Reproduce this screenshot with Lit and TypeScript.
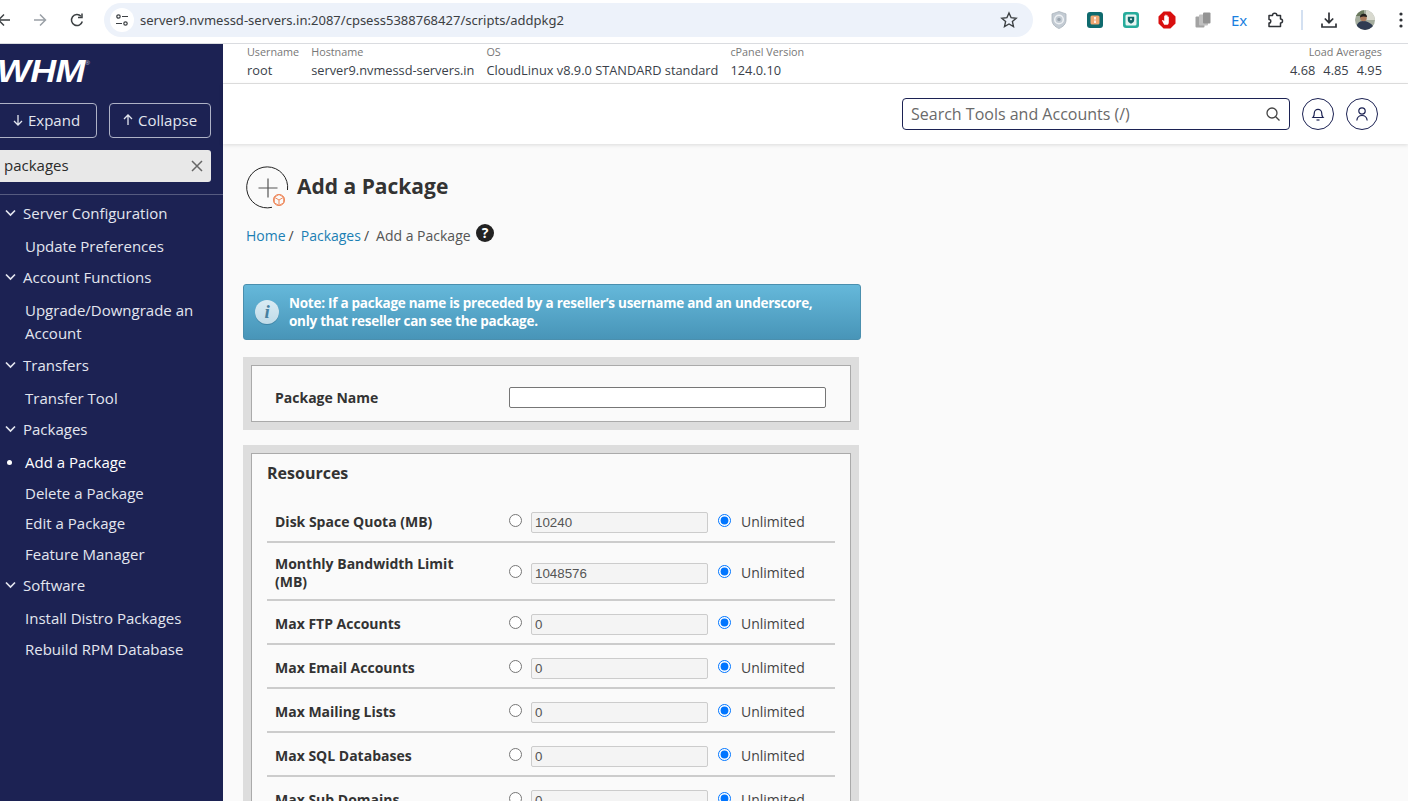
import { LitElement, html, css, svg } from "lit";
import { customElement } from "lit/decorators.js";

const NAV: [string, string][] = [
  ["h", "Server Configuration"], ["c", "Update Preferences"],
  ["h", "Account Functions"], ["c", "Upgrade/Downgrade an Account"],
  ["h", "Transfers"], ["c", "Transfer Tool"],
  ["h", "Packages"], ["a", "Add a Package"], ["c", "Delete a Package"], ["c", "Edit a Package"], ["c", "Feature Manager"],
  ["h", "Software"], ["c", "Install Distro Packages"], ["c", "Rebuild RPM Database"],
];
const ROWS: [string, string][] = [
  ["Disk Space Quota (MB)", "10240"], ["Monthly Bandwidth Limit (MB)", "1048576"],
  ["Max FTP Accounts", "0"], ["Max Email Accounts", "0"], ["Max Mailing Lists", "0"],
  ["Max SQL Databases", "0"], ["Max Sub Domains", "0"],
];
const EXT = [
  svg`<path d="M10 1.500l7 2.400v6.100c0 4-3 6.900-7 8.500-4-1.600-7-4.500-7-8.500V3.900z" fill="#c3cbd3" stroke="#a9b2bb" stroke-width=".8"/><circle cx="10" cy="9.500" r="4.300" fill="none" stroke="#eef1f4" stroke-width="1.500"/><circle cx="10" cy="9.500" r="1.700" fill="#9aa4ae"/>`,
  svg`<rect x="2" y="2" width="16" height="16" rx="3" fill="#0f6a6e"/><rect x="5.500" y="5.500" width="9" height="9" rx="1.500" fill="#f0a873"/><rect x="9.200" y="7" width="1.600" height="2.500" fill="#fff"/><rect x="9.200" y="10.500" width="1.600" height="2.500" fill="#fff"/>`,
  svg`<rect x="2" y="2" width="16" height="16" rx="3" fill="#27ac9c"/><rect x="4.500" y="4.500" width="11" height="11" rx="1.500" fill="#e9f6f3"/><path d="M6.800 6.800h6.400v3.200c0 1.800-1.400 3-3.200 3.800-1.800-.8-3.200-2-3.200-3.800z" fill="#14696b"/><circle cx="10" cy="9.300" r="1" fill="#e9f6f3"/>`,
  svg`<path d="M6.600 1.500h6.800l5.100 5.100v6.800l-5.100 5.100H6.600l-5.100-5.100V6.600z" fill="#d90f0f"/><path d="M7.200 14.800L5.200 11c-.4-.8.600-1.300 1.100-.7l.9 1V6.200c0-.9 1.100-.9 1.100 0v2.600-3.600c0-.9 1.200-.9 1.200 0v3.600-3c0-.9 1.200-.9 1.200 0v3.400-2.200c0-.8 1.100-.8 1.100 0v5.200c0 1.700-.7 2.600-2 2.600z" fill="#fff"/>`,
  svg`<rect x="2.500" y="6.500" width="9" height="11" rx="1" fill="#a3a3a3"/><rect x="6" y="4.500" width="9" height="11" rx="1" fill="#c0c0c0"/><rect x="10" y="2.500" width="7.500" height="11" rx="1" fill="#939393"/>`,
];

@customElement("app-root")
export class AppRoot extends LitElement {
  static styles = css`
    :host { display: block; width: 1408px; height: 801px; overflow: hidden; font-family: "Open Sans", "Noto Sans", sans-serif; color: #333; background: #fafafa; }
    * { box-sizing: border-box; }
    .page { display: flex; flex-direction: column; width: 1408px; height: 801px; overflow: hidden; }
    .toolbar { flex: none; height: 44px; background: #fff; border-bottom: 1px solid #dadce0; display: flex; align-items: center; padding-bottom: 4px; margin-left: -14px; width: 1440px; }
    .tb { flex: none; width: 36px; height: 36px; display: flex; align-items: center; justify-content: center; }
    .tb svg { display: block; }
    .reload { margin-left: 1px; }
    .pill { flex: none; width: 929px; height: 34px; margin-left: 9px; margin-right: 8px; border-radius: 17px; background: #edf2fa; display: flex; align-items: center; padding: 0 6px; font: 13px "Noto Sans", "Open Sans", sans-serif; color: #3c4043; }
    .tune { width: 24px; height: 24px; border-radius: 50%; background: #fff; display: flex; align-items: center; justify-content: center; margin-right: 6px; }
    .url { flex: 1; letter-spacing: 0.01px; }
    .star { flex: none; margin-right: 9px; display: block; }
    .ex { color: #1a7fe0; font: 15px "Noto Sans", sans-serif; letter-spacing: -0.2px; }
    .sep { flex: none; width: 2px; height: 20px; background: #d3e0f1; margin: 0 8px; }

    .body { flex: 1; display: flex; min-height: 0; }
    .side { flex: none; width: 223px; background: #1c2253; color: #e3e6ef; overflow: hidden; }
    .logo { height: 59px; padding: 10px 0 0 0; margin-left: -3px; font: italic 700 32px/34px "Liberation Sans", sans-serif; color: #fff; letter-spacing: -0.5px; white-space: nowrap; transform: scaleX(1.12); transform-origin: 0 50%; }
    .logo sup { font-size: 6px; font-style: normal; font-weight: 400; vertical-align: top; line-height: 18px; letter-spacing: 0; color: #c9ccdb; }
    .side-btns { display: flex; gap: 12px; margin-left: -12px; }
    .sbtn { height: 35px; border: 1px solid #aeb2c6; border-radius: 4px; display: flex; align-items: center; gap: 4px; font-size: 15px; color: #e3e6ef; padding: 0 0 2px; }
    .sbtn.e { width: 109px; padding-left: 23px; }
    .sbtn.c { width: 102px; padding-left: 12px; }
    .filter { margin: 12px 12px 0 -8px; height: 32px; background: #e8e8e8; border-radius: 3px; color: #2b2b2b; font-size: 15px; display: flex; align-items: center; justify-content: space-between; padding: 0 8px 2px 12px; }
    .filter svg { margin-top: 2px; }
    .rule { height: 1px; background: #565b80; margin-top: 12px; }
    nav { padding-top: 0.600px; }
    .head { height: 34px; display: flex; align-items: center; font-size: 15px; padding-left: 23px; position: relative; }
    .head svg { position: absolute; left: 5px; top: 13px; }
    .item { font-size: 15px; line-height: 23px; padding: 5px 12px 2.500px 25px; position: relative; }
    .item.a { color: #fff; }
    .item.a::before { content: ""; position: absolute; left: 7px; top: 13.500px; width: 5px; height: 5px; border-radius: 50%; background: #fff; }

    .main { flex: 1; min-width: 0; display: flex; flex-direction: column; }
    .info { flex: none; height: 40px; background: #fff; border-bottom: 1px solid #e2e2e2; display: flex; gap: 12px; padding: 1px 26px 0 24px; }
    .cell { display: flex; flex-direction: column; }
    .cell.load { margin-left: auto; align-items: flex-end; }
    .lab { font-size: 10.800px; line-height: 14px; color: #777; }
    .val { font-size: 12.800px; line-height: 22px; color: #3a3f4a; white-space: nowrap; }
    .vals { display: flex; gap: 8px; }
    .top { flex: none; height: 60px; background: #fff; box-shadow: 0 1px 4px rgba(0,0,0,.13); display: flex; align-items: center; justify-content: flex-end; gap: 12px; padding: 0 30px 0 0; position: relative; }
    .search { width: 388px; height: 32px; border: 1px solid #1c2253; border-radius: 4px; display: flex; align-items: center; justify-content: space-between; padding: 0 8px; font-size: 16px; color: #6a6a6a; }
    .round { width: 32px; height: 32px; border: 1px solid #1c2253; border-radius: 50%; display: flex; align-items: center; justify-content: center; }
    .content { flex: 1; min-height: 0; overflow: hidden; padding: 22px 0 0 20px; }
    .title { display: flex; align-items: center; gap: 7px; margin-left: 3px; }
    .title svg { display: block; flex: none; }
    h1 { margin: 0; font-size: 21px; font-weight: 700; color: #333; line-height: 40px; padding-bottom: 4px; }
    .crumbs { display: flex; align-items: center; margin: 13px 0 0 3px; font-size: 14px; height: 24px; color: #555; }
    .crumbs a { color: #1b7fb4; }
    .crumbs .s { margin: 0 7px 0 3px; color: #444; }
    .crumbs svg { margin: -4px 0 0 5px; }
    .alert { width: 618px; height: 56px; margin-top: 37px; border: 1px solid #4a8fae; border-radius: 3px; background: linear-gradient(#65b8da, #4895b8); display: flex; align-items: center; color: #fff; font-size: 13.500px; font-weight: 700; line-height: 18px; padding-left: 11px; gap: 10px; letter-spacing: -0.26px; }
    .alert svg { flex: none; }
    .panel { width: 616px; background: #ddd; padding: 8px; }
    .panel.pk { margin-top: 17px; height: 73px; }
    .panel.res { margin-top: 15px; }
    .inner { background: #fafafa; border: 1px solid #aaa; }
    .pk .inner { height: 57px; display: flex; align-items: center; padding: 8px 0 0 23px; }
    .lbl { flex: none; width: 234px; font-size: 14px; font-weight: 700; color: #333; line-height: 18px; padding-right: 40px; }
    .pk input { width: 317px; height: 21px; border: 1px solid #767676; border-radius: 2px; background: #fff; padding: 0 4px; }
    .res .inner { padding: 0 15px; }
    h2 { margin: 0; font-size: 16px; font-weight: 700; color: #333; line-height: 22px; padding-top: 8px; height: 45px; }
    .row { display: flex; align-items: center; min-height: 44px; border-bottom: 2px solid #ccc; padding: 4px 0 0 8px; }
    .row.tall { min-height: 58px; }
    .row input[type="radio"] { flex: none; margin: 0; width: 13px; height: 13px; position: relative; top: -2px; }
    .row input[type="text"] { flex: none; width: 177px; height: 21px; margin: 0 10px 0 9px; border: 1px solid #ccc; border-radius: 2px; background: #f4f4f4; color: #555; font: 13.330px "Liberation Sans", Arial, sans-serif; padding: 0 3px; }
    .un { font-size: 14px; color: #444; margin: -1px 0 0 10px; }
  `;

  render() {
    return html`<div class="page">
      <div class="toolbar">
        <div class="tb"><svg width="16" height="16" viewBox="0 0 16 16" fill="none" stroke="#3c4043" stroke-width="1.500"><path d="M14 8H2.500M8 2.500L2.500 8 8 13.500"/></svg></div>
        <div class="tb"><svg width="16" height="16" viewBox="0 0 16 16" fill="none" stroke="#9aa0a6" stroke-width="1.500"><path d="M2 8h11.500M8 2.500L13.500 8 8 13.500"/></svg></div>
        <div class="tb reload"><svg width="16" height="16" viewBox="0 0 16 16" fill="none" stroke="#3c4043" stroke-width="1.500"><path d="M13.300 9.500A5.500 5.500 0 1 1 12 4.300"/><path d="M13 1.500v4H9" /></svg></div>
        <div class="pill">
          <div class="tune"><svg width="14" height="14" viewBox="0 0 14 14" fill="none" stroke="#3c4043" stroke-width="1.200"><circle cx="3.500" cy="3.500" r="1.700"/><path d="M7 3.500h6M1 10.500h6"/><circle cx="10.500" cy="10.500" r="1.700"/></svg></div>
          <div class="url">server9.nvmessd-servers.in:2087/cpsess5388768427/scripts/addpkg2</div>
          <svg class="star" width="18" height="18" viewBox="0 0 18 18" fill="none" stroke="#3c4043" stroke-width="1.400"><path d="M9 2l2.100 4.700 5.100.5-3.800 3.400 1.100 5L9 13l-4.500 2.600 1.100-5L1.800 7.200l5.100-.5z"/></svg>
        </div>
        ${EXT.map((e) => html`<div class="tb"><svg width="20" height="20" viewBox="0 0 20 20">${e}</svg></div>`)}
        <div class="tb"><span class="ex">Ex</span></div>
        <div class="tb"><svg width="18" height="18" viewBox="0 0 18 18" fill="none" stroke="#2f3237" stroke-width="1.500"><path d="M3 4.500h3.500a2.200 2.200 0 0 1 4.400 0H14.500v3.500a2 2 0 0 1 0 4v3.500H3v-3.500a1.800 1.800 0 0 0 0-3.600z" stroke-linejoin="round"/></svg></div>
        <div class="sep"></div>
        <div class="tb"><svg width="18" height="18" viewBox="0 0 18 18" fill="none" stroke="#2f3237" stroke-width="1.700"><path d="M9 1.500v10M4.800 7.500L9 11.700l4.200-4.200M2 12.500v3.500h14v-3.500"/></svg></div>
        <div class="tb"><svg width="20" height="20" viewBox="0 0 20 20"><defs><clipPath id="av"><circle cx="10" cy="10" r="10"/></clipPath></defs><g clip-path="url(#av)"><rect width="20" height="20" fill="#a5ad9e"/><rect x="11" width="9" height="10" fill="#d8d9cf"/><rect y="0" width="9" height="6" fill="#6b7a5f"/><path d="M1 20c0-6 3-9 7-9s8 2 10 5v4z" fill="#2f3b52"/><circle cx="8.500" cy="8" r="3.300" fill="#a9795c"/><path d="M5 7.500C5 4 8 3.500 9.500 3.800 11.500 4 12 6 12 7c-2-.5-4.500-1-7 .5z" fill="#23201e"/></g></svg></div>
        <div class="tb"><svg width="4" height="16" viewBox="0 0 4 16" fill="#2f3237"><circle cx="2" cy="2" r="1.600"/><circle cx="2" cy="8" r="1.600"/><circle cx="2" cy="14" r="1.600"/></svg></div>
      </div>
      <div class="body">
        <aside class="side">
          <div class="logo">WHM<sup>®</sup></div>
          <div class="side-btns">
            <div class="sbtn e"><svg width="12" height="12" viewBox="0 0 12 12" fill="none" stroke="#e3e6ef" stroke-width="1.300"><path d="M6 1v10M2 7l4 4 4-4"/></svg> Expand</div>
            <div class="sbtn c"><svg width="12" height="12" viewBox="0 0 12 12" fill="none" stroke="#e3e6ef" stroke-width="1.300"><path d="M6 11V1M2 5l4-4 4 4"/></svg> Collapse</div>
          </div>
          <div class="filter"><span>packages</span><svg width="12" height="12" viewBox="0 0 12 12" fill="none" stroke="#666" stroke-width="1.500"><path d="M1 1l10 10M11 1L1 11"/></svg></div>
          <div class="rule"></div>
          <nav>
            ${NAV.map(([k, t]) => k === "h"
              ? html`<div class="head"><svg width="11" height="8" viewBox="0 0 11 8" fill="none" stroke="#e3e6ef" stroke-width="1.700"><path d="M1 1.500l4.500 4.500L10 1.500"/></svg>${t}</div>`
              : html`<div class="item ${k === "a" ? "a" : ""}">${t}</div>`)}
          </nav>
        </aside>
        <main class="main">
          <div class="info">
            <div class="cell"><span class="lab">Username</span><span class="val">root</span></div>
            <div class="cell"><span class="lab">Hostname</span><span class="val">server9.nvmessd-servers.in</span></div>
            <div class="cell"><span class="lab">OS</span><span class="val">CloudLinux v8.9.0 STANDARD standard</span></div>
            <div class="cell"><span class="lab">cPanel Version</span><span class="val">124.0.10</span></div>
            <div class="cell load"><span class="lab">Load Averages</span><span class="val vals"><span>4.68</span><span>4.85</span><span>4.95</span></span></div>
          </div>
          <div class="top">
            <div class="search"><span>Search Tools and Accounts (/)</span><svg width="16" height="16" viewBox="0 0 16 16" fill="none" stroke="#444" stroke-width="1.300"><circle cx="7" cy="7" r="5"/><path d="M10.700 10.700L14.500 14.500"/></svg></div>
            <div class="round"><svg width="16" height="16" viewBox="0 0 16 16" fill="none" stroke="#1c2253" stroke-width="1.200"><path d="M3 11.500c1-1 1.300-2 1.300-4.500a3.700 3.700 0 0 1 7.400 0c0 2.500.3 3.500 1.300 4.500z"/><path d="M6.500 14h3"/></svg></div>
            <div class="round"><svg width="16" height="16" viewBox="0 0 16 16" fill="none" stroke="#1c2253" stroke-width="1.200"><circle cx="8" cy="5" r="3.200"/><path d="M2.800 14.500c.4-3 2.400-5 5.200-5s4.800 2 5.200 5"/></svg></div>
          </div>
          <div class="content">
            <div class="title">
              <svg width="44" height="44" viewBox="0 0 44 44" fill="none">
                <path d="M41.500 24A20.500 20.500 0 1 0 26 41.300" stroke="#222" stroke-width="1"/>
                <path d="M22 12.500v19M12.500 22h19" stroke="#555" stroke-width="1.200"/>
                <g stroke="#ee8a5e" stroke-width="1"><circle cx="33" cy="34" r="5.600"/><path d="M33 28.500l4.700 2.700v5.600L33 39.500l-4.700-2.700v-5.600zM28.300 31.200L33 34l4.700-2.800M33 34v5.500"/></g>
              </svg>
              <h1>Add a Package</h1>
            </div>
            <div class="crumbs"><a>Home</a><span class="s">/</span><a>Packages</a><span class="s">/</span><span>Add a Package</span>
              <svg width="18" height="18" viewBox="0 0 18 18"><circle cx="9" cy="9" r="9" fill="#222"/><text x="9" y="14" text-anchor="middle" font-family="Open Sans" font-weight="700" font-size="14" fill="#fff">?</text></svg>
            </div>
            <div class="alert">
              <svg width="24" height="26" viewBox="0 0 24 26"><defs><linearGradient id="ig" x1="0" y1="0" x2="0" y2="1"><stop offset="0" stop-color="#d9ebf3"/><stop offset="1" stop-color="#c0dbe8"/></linearGradient></defs><circle cx="12" cy="14" r="12" fill="#2f6f8f" opacity=".55"/><circle cx="12" cy="13" r="12" fill="url(#ig)"/><text x="12" y="19" text-anchor="middle" font-family="Liberation Serif" font-style="italic" font-weight="700" font-size="19" fill="#47809f">i</text></svg>
              <div>Note: If a package name is preceded by a reseller’s username and an underscore,<br>only that reseller can see the package.</div>
            </div>
            <div class="panel pk"><div class="inner"><div class="lbl">Package Name</div><input type="text" /></div></div>
            <div class="panel res"><div class="inner">
              <h2>Resources</h2>
              ${ROWS.map(([l, v]) => html`<div class="row ${l.length > 24 ? "tall" : ""}">
                <div class="lbl">${l}</div>
                <input type="radio" name=${l} />
                <input type="text" .value=${v} disabled />
                <input type="radio" name=${l} checked />
                <span class="un">Unlimited</span>
              </div>`)}
            </div></div>
          </div>
        </main>
      </div>
    </div>`;
  }
}
